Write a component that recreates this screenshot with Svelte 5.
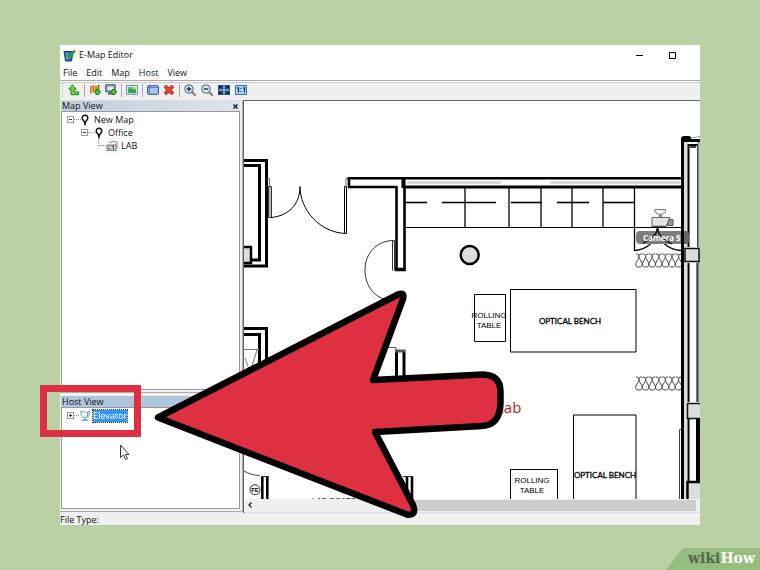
<script>
  const menus = ['File', 'Edit', 'Map', 'Host', 'View'];
  const counters = [465, 509, 541, 572, 603];
  const dashes = [[405, 427], [442, 496], [511, 542], [557, 589], [603, 634]];
  const coilTops = [254, 377];
  const coil = Array.from({ length: 7 }, (_, i) => 636 + i * 6.6);
</script>

{#snippet pin()}
  <svg class="pin" viewBox="0 0 8 12" aria-hidden="true">
    <path d="M4 1.200a2.800 2.800 0 0 0-2.800 2.800C1.200 5.800 3.200 6.600 4 9 4.800 6.600 6.800 5.800 6.800 4A2.800 2.800 0 0 0 4 1.200Z" fill="#fff" stroke="#111" stroke-width="1.500" />
    <path d="M4 7.500V11.500" stroke="#111" stroke-width="1.300" />
  </svg>
{/snippet}

{#snippet lens(plus)}
  <svg viewBox="0 0 12 12" aria-hidden="true">
    <path d="M8 8l3 3" stroke="#8c8476" stroke-width="2.400" stroke-linecap="round" />
    <circle cx="5" cy="5" r="4.200" fill="#d9eaf6" stroke="#6c7f90" stroke-width="1.200" />
    <path d="M2.700 5h4.600" stroke="#1c2c50" stroke-width="1.400" />
    {#if plus}<path d="M5 2.700v4.600" stroke="#1c2c50" stroke-width="1.400" />{/if}
  </svg>
{/snippet}

<div class="stage">
  <div class="window">
    <header class="title">
      <svg class="logo" viewBox="0 0 13 13" aria-hidden="true">
        <path d="M1 2.500h9L8.500 12H2.500Z" fill="#2c66c8" stroke="#123a80" />
        <path d="M2.500 4.500h3V10h-2Z" fill="#8fc0f2" />
        <path d="M3.500 5.500l2.500 3.500L12 1.500" fill="none" stroke="#2f9e2c" stroke-width="2.400" />
      </svg>
      <h1>E-Map Editor</h1>
      <button class="sys" aria-label="Minimize"><svg viewBox="0 0 9 9"><path d="M1 4.500h7" stroke="#000" /></svg></button>
      <button class="sys" aria-label="Maximize"><svg viewBox="0 0 9 9"><path d="M1.500 1.500h6v6h-6Z" fill="none" stroke="#000" /></svg></button>
    </header>

    <nav class="menu">
      {#each menus as m}<button>{m}</button>{/each}
    </nav>

    <div class="toolbar" role="toolbar" aria-label="Map tools">
      <div class="grip"></div>
      <button aria-label="Up">
        <svg viewBox="0 0 12 12"><path d="M4.500 .8L.800 5.200h2.200v5.500H10.700V8H6V5.200H8.200Z" fill="#6fdc4c" stroke="#1e7d16" /></svg>
      </button>
      <div class="sep"></div>
      <button aria-label="Add map">
        <svg viewBox="0 0 12 12"><path d="M1 2l3-1 4 1 3-1v7L8 9.500 4 8.500 1 10Z" fill="#e8cf6a" /><path d="M2 2v7M4.500 1.500v6M7 2v6" stroke="#c8523c" stroke-width="1.200" /><path d="M9.500 1v4" stroke="#37882b" stroke-width="1.500" /><path d="M8.300 5v6M5.500 8h6" stroke="#217c19" stroke-width="3" /><path d="M8.300 6v4M6.500 8h4" stroke="#59cc3b" stroke-width="1.300" /></svg>
      </button>
      <button aria-label="Add host">
        <svg viewBox="0 0 12 12"><path d="M.7.800h9.500v7H.700Z" fill="#8ea8bf" stroke="#40566d" /><path d="M2.500 2.500h6v3.500h-6Z" fill="#dceaf4" /><path d="M3 9.500h4" stroke="#40566d" stroke-width="2" /><path d="M8.500 5v6M5.700 8h6" stroke="#217c19" stroke-width="3" /><path d="M8.500 6v4M6.700 8h4" stroke="#59cc3b" stroke-width="1.300" /></svg>
      </button>
      <div class="sep"></div>
      <button aria-label="Picture">
        <svg viewBox="0 0 12 12"><path d="M.6 1.500h10.800v8.800H.600Z" fill="#e2eef7" stroke="#6787a5" /><path d="M2 3h8v6H2Z" fill="#57b3d2" /><path d="M2 9V6l3-2 2 2 3-1v4Z" fill="#3fa13a" /><path d="M7 3h3v2H7Z" fill="#c4e65a" /></svg>
      </button>
      <div class="sep"></div>
      <button aria-label="Rename">
        <svg viewBox="0 0 12 12"><rect x=".6" y="1.700" width="10.800" height="8.600" rx="1" fill="#a9c9ee" stroke="#2c4f86" /><path d="M2.500 2v8M1 3.500h10" stroke="#5681ba" /></svg>
      </button>
      <button aria-label="Delete">
        <svg viewBox="0 0 12 12"><path d="M2 2l8 8M10 2l-8 8" stroke="#a8190d" stroke-width="3.600" /><path d="M2.300 2.300l7.400 7.400M9.700 2.300L2.300 9.700" stroke="#ef4631" stroke-width="2.200" /></svg>
      </button>
      <div class="sep"></div>
      <div class="zoom">
        <button aria-label="Zoom in">{@render lens(true)}</button>
        <button aria-label="Zoom out">{@render lens(false)}</button>
        <button aria-label="Fit window">
          <svg viewBox="0 0 12 12"><path d="M0 1h12v10H0Z" fill="#2b5486" /><path d="M1 2h3.500L1 5ZM11 2H7.500L11 5ZM1 10h3.500L1 7ZM11 10H7.500L11 7Z" fill="#0b1f3d" /><path d="M4 4.500l1 1M8 4.500l-1 1M4 7.500l1-1M8 7.500l-1-1" stroke="#0b1f3d" stroke-width="1.500" /><path d="M6 1.500v9M1 6h10" stroke="#b8dcf5" /></svg>
        </button>
        <button aria-label="Actual size">
          <svg viewBox="0 0 12 12"><path d="M.5 1.500h11v9H.500Z" fill="#a8d2f4" stroke="#3b6ea3" /><path d="M2 4h1.500v4.500M8 4h1.500v4.500" fill="none" stroke="#123a6c" stroke-width="1.300" /><path d="M5.500 4.500h1M5.500 7.500h1" stroke="#123a6c" stroke-width="1.200" /></svg>
        </button>
      </div>
    </div>

    <main>
      <aside>
        <section class="panel maps">
          <h2>Map View</h2>
          <button class="close" aria-label="Close map view"><svg viewBox="0 0 7 7"><path d="M1.500 1.500l4 4M5.500 1.500l-4 4" stroke="#111" stroke-width="1.300" /></svg></button>
          <ul class="tree">
            <li>
              <div class="row"><button class="box" aria-label="Collapse New Map"><svg viewBox="0 0 7 7"><path d="M1 2.500h3" stroke="#333" /></svg></button><i></i>{@render pin()}<span>New Map</span></div>
              <ul>
                <li>
                  <div class="row"><button class="box" aria-label="Collapse Office"><svg viewBox="0 0 7 7"><path d="M1 2.500h3" stroke="#333" /></svg></button><i></i>{@render pin()}<span>Office</span></div>
                  <ul>
                    <li>
                      <div class="row leaf"><i></i>
                        <svg class="plan" viewBox="0 0 12 11" aria-hidden="true"><path d="M3 3l4-2 4 1v6" fill="#e9eef0" stroke="#888" /><path d="M1 5h9v4H1Z" fill="#fff" stroke="#777" /><path d="M3 5v4M5 6.500h2M7.500 5v4" stroke="#555" /><path d="M0 10.300h11" stroke="#3585c5" /></svg>
                        <span>LAB</span></div>
                    </li>
                  </ul>
                </li>
              </ul>
            </li>
          </ul>
        </section>
        <section class="panel hosts">
          <h2>Host View</h2>
          <ul class="tree">
            <li>
              <div class="row"><button class="box" aria-label="Expand Elevator"><svg viewBox="0 0 7 7"><path d="M1 2.500h3M2.500 1v3" stroke="#333" /></svg></button><i></i>
                <svg class="host" viewBox="0 0 12 12" aria-hidden="true"><path d="M1 1.500l8 1 2-2-1 7-5 1-3-2Z" fill="#e8f3fa" stroke="#8aa3b3" /><path d="M9 2.500L8.500 7.500" stroke="#6f8898" /><path d="M6 8.500v2M2.500 11h7" stroke="#35a5d8" stroke-width="1.300" /></svg>
                <span class="selected">Elevator</span></div>
            </li>
          </ul>
        </section>
      </aside>

      <div class="canvas">
        <svg class="map" viewBox="244 101 456 398" preserveAspectRatio="xMinYMin slice" role="img" aria-label="Floor plan">
          <g fill="none" stroke="#000">
            <path d="M244 160.500H266.500V266H244" stroke-width="3" />
            <path d="M244 165.500H259.500V260H244" stroke-width="3" />
            <rect x="240" y="247" width="11" height="16" fill="#ddd" stroke-width="2.500" />
            <path d="M267.500 178.500h2v8h-2" stroke="#777" />
            <path d="M268.500 186.500h3v31h-3Z" fill="#bbb" stroke="#333" />
            <path d="M271 217.500C288 216 300 205 300 186.500C300 210 320 233 346.500 233.500V186.500H344.500V233" stroke-width="1" />
            <path d="M348 178.500h-2v8" stroke="#777" />

            <path d="M347.500 178.200H682" stroke-width="2.600" />
            <path d="M349 178V187H396.500V269.500H404.500V187" stroke-width="2.600" />
            <path d="M403.500 177v11" stroke-width="4" />
            <path d="M395 269.500h10.500" stroke-width="3.500" />
            <path d="M403 187H682" stroke-width="3" />
            <path d="M407 182.500H501M550 182.500H680" stroke="#d8d8d8" stroke-width="3" />
            <path d="M392.500 240.500h2v30M392.500 240.500v30M393 240.500C376 241 365 254 365 270C365 287 376 300 393 301" stroke="#333" />

            <path d="M405 227.500H682" />
            {#each counters as x}<path d="M{x} 188v39" stroke-width="1.300" />{/each}
            {#each dashes as [a, b]}<path d="M{a} 202.500H{b}" stroke-width="1.600" />{/each}
            <path d="M634.500 188v62.500C646 250 657 242 657.500 228C658 242 669 250 681 250.500" stroke-width="1.300" />
            <circle cx="469.700" cy="255" r="9" fill="#ddd" stroke-width="2.500" />
          </g>

          <g fill="none" stroke="#444" stroke-width="1">
            {#each coilTops as y}
              {#each coil as x}
                <path d="M{x} {y}c5 0 3 4 1 7c-2 3-2 6 2 6s4-3 2-6c-2-3-4-7 1-7" />
              {/each}
            {/each}
          </g>

          <g>
            <rect x="636" y="231" width="53" height="13" rx="4" fill="#7d7d7d" />
            <path d="M643 243C653 239 657 234 657.500 228C658 234 663 240 672 244" fill="none" stroke="#000" stroke-width="1.300" />
            <text x="643" y="241" class="camera">Camera 5</text>
            <path d="M655 209.500h10.500v2c-1 2-3 3-5 3s-4.500-1-5.500-3Z" fill="#eee" stroke="#777" />
            <path d="M659 214.500h3v3h-3Z" fill="#888" />
            <path d="M652 217.500h18l-4 9h-14Z" fill="#e4e4e4" stroke="#666" />
            <path d="M669 219.500h4v6h-6Z" fill="#999" stroke="#555" />
            <path d="M653 226.500h13" stroke="#444" stroke-width="1.500" />
          </g>

          <g>
            <path d="M684 142h16v357h-16Z" fill="#fff" />
            <path d="M684 142h3v357h-3Z" fill="#ddd" />
            <path d="M681 138q1-2 3-2h5q2 0 2 3h9v3H681Z" />
            <path d="M691 138l9-1.500" stroke="#999" />
            <path d="M681 140h3v359h-3Z" />
            <path d="M684 142h4v102h-4Z" fill="#ddd" />
            <path d="M688.500 247V145h9.500v102M688.500 263v139M697.500 263v139" fill="none" stroke="#000" stroke-width="2" />
            <path d="M698.500 142v260" stroke="#888" stroke-width="2" />
            <path d="M690 147h6" stroke="#000" stroke-width="1.500" />
            <path d="M684 231h2q3 0 3 4v6q0 3-3 3h-2Z" fill="#666" />
            <path d="M685 248.500h14v13h-14ZM687.500 403.500h14v15h-14Z" fill="#ddd" stroke="#111" stroke-width="1.500" />
            <path d="M688.500 419v63" stroke="#000" stroke-width="2" />
            <path d="M696 419h4v63h-4Z" />
            <path d="M689 483h11v16h-11Z" fill="#ddd" />
            <path d="M700 482H687.500v17" fill="none" stroke="#000" stroke-width="2.500" />
            <path d="M681 429.500h-1.500V499" fill="none" stroke="#444" />
          </g>

          <g fill="none" stroke="#000">
            <path d="M474.500 294.500h31v47h-31ZM510.500 289.500h125.500v62.500h-125.500ZM573.500 520V415H636v105M510.500 520V469.500h47v50" />
            <path d="M244 328.500H266.500V400M244 334.500H259.500V400" stroke-width="3" />
            <path d="M244 349.500h15M245 358l5 14 7-22" stroke="#777" />
            <path d="M387 347.500h9v3" stroke="#555" />
            <path d="M396.500 351V400M404 351V400" stroke-width="3" />
            <path d="M395 351h10.500" stroke="#555" stroke-width="3" />
            <path d="M244 471c5 3 9 4 16 4.500" stroke="#444" />
            <path d="M262.300 476v30M267.300 476v30M407 476v30M412 476v30" stroke-width="2.600" />
            <path d="M261 476.500h8M403 476.500h10" stroke="#333" />
            <circle cx="255" cy="489.700" r="5" stroke="#333" />
          </g>
          <text x="255" y="492" class="plain fe">FE</text>
          <text x="489" y="318" class="plain">ROLLING</text>
          <text x="489" y="328" class="plain">TABLE</text>
          <text x="532" y="483" class="plain">ROLLING</text>
          <text x="532" y="493" class="plain">TABLE</text>
          <text x="570" y="324" class="bench">OPTICAL BENCH</text>
          <text x="605" y="478" class="bench">OPTICAL BENCH</text>
          <text x="334" y="503" class="plain">LAB BOATS</text>
          <text x="496" y="413" class="lab">Lab</text>
        </svg>
        <div class="scroll">
          <button aria-label="Scroll left"><svg viewBox="0 0 12 12"><path d="M7.500 3.500L5 6l2.500 2.500" fill="none" stroke="#222" stroke-width="1.300" /></svg></button>
          <div class="thumb"></div>
        </div>
      </div>
    </main>
    <footer>File Type:</footer>
  </div>

  <div class="highlight"></div>
  <svg class="pointer" viewBox="0 0 760 570" aria-hidden="true">
    <path d="M120.500 445v12.500l3-2.500 2 4.500 2-1-2-4h3.500Z" fill="#fff" stroke="#333" />
    <path d="M158 417.500L398 294.500Q405 291.500 403 299L373 380L483 374.500Q500 375 500.500 391V403Q500 425 482 426L375 432L413 505Q417 516 407 514.500Z" fill="#de3040" stroke="#000" stroke-width="6.500" stroke-linejoin="round" />
  </svg>
  <div class="brand"><span>wiki</span>How</div>
</div>

<style>
  :global(body) { margin: 0; }
  .stage {
    position: relative;
    box-sizing: border-box;
    min-height: 100vh;
    padding: 45px 60px;
    background: #b9d1a5;
    overflow: hidden;
    font: 9px/12px "Open Sans", "Noto Sans", sans-serif;
    color: #111;
  }
  button { margin: 0; padding: 0; border: 0; background: none; font: inherit; color: inherit; }
  svg { display: block; }
  h1, h2 { margin: 0; font: inherit; }
  ul { margin: 0; padding: 0; list-style: none; }

  .window { background: #fff; }
  .title { display: flex; align-items: center; height: 20px; padding: 0 23px 0 3px; }
  .logo { width: 13px; height: 13px; }
  .title h1 { flex: 1; padding-left: 3px; }
  .sys { width: 9px; height: 9px; margin-left: 24px; }
  .menu { display: flex; gap: 9px; height: 15px; padding: 0 3px; align-items: center; }

  .toolbar {
    display: flex;
    align-items: center;
    gap: 4px;
    height: 16px;
    padding: 1px 2px;
    border-top: 1px solid #aaa;
    border-bottom: 1px solid #f0f0f0;
    box-shadow: inset 0 1px #fff, inset 0 2px #ccc;
    background: #f0f0f0;
  }
  .toolbar button, .toolbar button svg { width: 12px; height: 12px; }
  .grip { width: 1px; height: 14px; border-left: 1px dotted #bbb; }
  .sep { width: 1px; height: 13px; background: #aaa; }
  .zoom { display: flex; gap: 5px; }

  main { display: flex; background: #f0f0f0; border-top: 1px solid #ddd; }
  aside { display: flex; flex-direction: column; gap: 3px; width: 183px; padding-bottom: 1px; box-sizing: border-box; }
  .panel { position: relative; display: flex; flex-direction: column; box-sizing: border-box; padding: 0 2px 2px 1px; border-right: 1px solid #aaa; border-bottom: 1px solid #aaa; }
  .panel h2 { height: 11px; padding-left: 1px; line-height: 10px; background: linear-gradient(90deg, #bfcddd, #dde5ee); }
  .maps { flex: 1; }
  .panel.hosts h2 { height: 10px; background: #b0c6df; }
  .hosts { height: 116px; border-top: 1px solid #bbb; }
  .close { position: absolute; top: 2px; right: 3px; width: 7px; height: 7px; }
  .tree { flex: 1; padding: 1px 5px; border: 1px solid #999; background: #fff; }
  .maps .tree { margin-top: -1px; }
  .tree ul { padding-left: 14px; }
  .row { display: flex; align-items: center; height: 13px; }
  .box { box-sizing: border-box; width: 7px; height: 7px; border: 1px solid #999; background: #fff; flex: none; }
  .box svg { width: 7px; height: 7px; }
  .row i { width: 7px; border-top: 1px dotted #999; }
  .row span { margin-left: 5px; }
  .pin { width: 8px; height: 12px; }
  .leaf { margin-left: 3px; }
  .leaf i { height: 6px; border-top: 0; border-bottom: 1px dotted #999; border-left: 1px dotted #999; margin-bottom: 6px; }
  .plan, .host { width: 12px; height: 11px; }
  .leaf span { margin-left: 3px; }
  .hosts .row i { width: 5px; }
  .row .selected { margin-left: 2px; background: #3096f3; color: #fff; outline: 1px dotted #333; line-height: 12px; }

  .canvas { flex: 1; min-width: 0; border-left: 1px solid #666; border-top: 1px solid #666; margin-top: -1px; background: #fff; }
  .map { width: 100%; height: 398px; }
  .map text { stroke: none; }
  .plain { font: 8px "Liberation Sans", sans-serif; text-anchor: middle; fill: #000; }
  .map .fe { font-size: 6px; font-weight: bold; }
  .map .bench { font: 8px Lato, sans-serif; text-anchor: middle; fill: #000; stroke: #000; stroke-width: .3px; }
  .camera { font: bold 8px "Open Sans", sans-serif; fill: #fff; }
  .lab { font: 15px "Open Sans", sans-serif; fill: #c6171b; }
  .scroll { display: flex; height: 13px; background: #f0f0f0; border-bottom: 1px solid #ddd; }
  .scroll button, .scroll button svg { width: 12px; height: 12px; }
  .thumb { flex: 1; margin: 1px 4px 1px 154px; background: #cdcdcd; }
  footer { height: 12px; line-height: 14px; background: #f0f0f0; }

  .highlight { position: absolute; left: 40px; top: 385px; width: 87px; height: 38px; border: 7px solid #de3040; }
  .pointer { position: absolute; left: 0; top: 0; width: 760px; height: 570px; }
  .brand {
    position: absolute;
    right: 0;
    bottom: 0;
    height: 22px;
    padding: 0 5px 0 22px;
    background: #95bd7e;
    clip-path: polygon(17px 0, 100% 0, 100% 100%, 0 100%);
    color: #fff;
    font: bold 14px/21px "DejaVu Serif", serif;
  }
  .brand span { color: #56694d; }
</style>
